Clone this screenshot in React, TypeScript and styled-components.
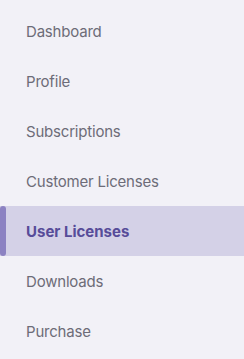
import React from 'react'
import styled, { createGlobalStyle } from 'styled-components'

const GlobalStyle = createGlobalStyle`
  html, body {
    margin: 0;
    padding: 0;
    background-color: #f2f1f7;
  }
`

const Sidebar = styled.nav`
  display: flex;
  flex-direction: column;
  width: 244px;
  min-height: 359px;
  box-sizing: border-box;
  padding-top: 6px;
  background-color: #f2f1f7;
  font-family: Inter, "Liberation Sans", sans-serif;
`

const Item = styled.a<{ $active?: boolean }>`
  position: relative;
  display: flex;
  align-items: center;
  height: 50px;
  padding-left: 26px;
  font-size: 15px;
  text-decoration: none;
  letter-spacing: ${p => (p.$active ? '0' : '-0.2px')};
  color: ${p => (p.$active ? '#574c99' : '#6d6c78')};
  font-weight: ${p => (p.$active ? 700 : 400)};
  background-color: ${p => (p.$active ? '#d4d1e7' : 'transparent')};

  &::before {
    content: '';
    display: ${p => (p.$active ? 'block' : 'none')};
    position: absolute;
    left: 0;
    top: 0;
    bottom: 0;
    width: 6px;
    border-radius: 3px;
    background-color: #8c82c2;
  }
`

const items = [
  'Dashboard',
  'Profile',
  'Subscriptions',
  'Customer Licenses',
  'User Licenses',
  'Downloads',
  'Purchase',
]

const App: React.FC = () => {
  return (
    <>
      <GlobalStyle />
      <Sidebar>
        {items.map(label => (
          <Item key={label} $active={label === 'User Licenses'}>
            {label}
          </Item>
        ))}
      </Sidebar>
    </>
  )
}

export default App
